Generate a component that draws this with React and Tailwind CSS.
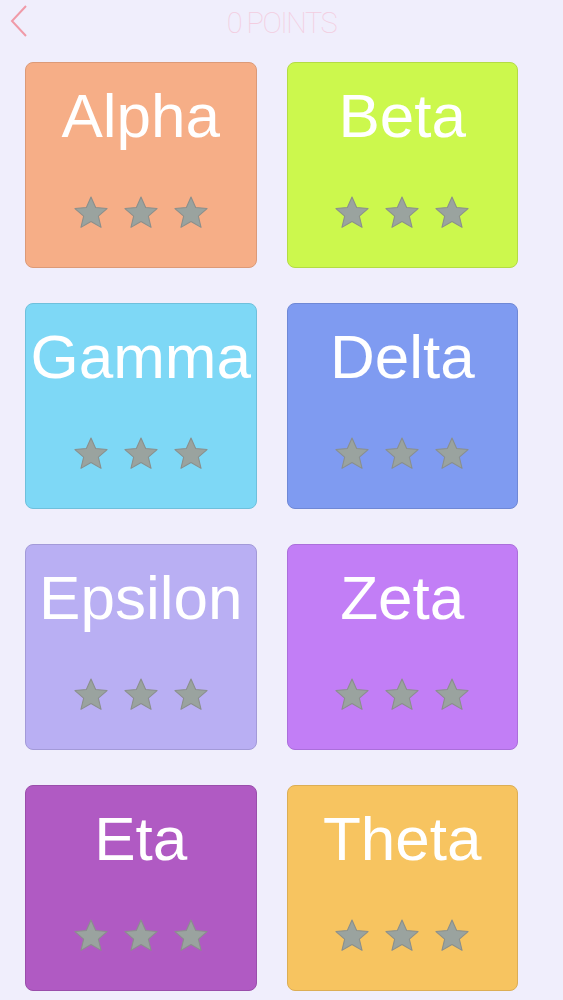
import React from 'react';

const levels = [
  { name: 'Alpha', bg: 'bg-[#f6ae87]', border: 'border-[#dc9a78]' },
  { name: 'Beta', bg: 'bg-[#ccf84d]', border: 'border-[#b4dc44]' },
  { name: 'Gamma', bg: 'bg-[#7ed8f6]', border: 'border-[#6fc0dc]' },
  { name: 'Delta', bg: 'bg-[#7f9bf1]', border: 'border-[#6f88d6]' },
  { name: 'Epsilon', bg: 'bg-[#b9aff3]', border: 'border-[#a39ad8]' },
  { name: 'Zeta', bg: 'bg-[#c27ef6]', border: 'border-[#ab6fdb]' },
  { name: 'Eta', bg: 'bg-[#b05ac3]', border: 'border-[#9a4eab]' },
  { name: 'Theta', bg: 'bg-[#f7c460]', border: 'border-[#dcae55]' },
];

const Star = () => (
  <svg width="36" height="35" viewBox="0 0 24 23">
    <path
      d="M12 1.2l3.1 7 7.6.7-5.8 5 1.8 7.5L12 17.5l-6.7 3.9 1.8-7.5-5.8-5 7.6-.7z"
      fill="#9aa39f"
      stroke="#8a8f8c"
      strokeWidth="0.7"
      strokeLinejoin="round"
    />
  </svg>
);

const LevelCard = ({ name, bg, border }) => (
  <div className={`h-[206px] rounded-lg border ${bg} ${border} flex flex-col items-center`}>
    <div className="pt-[22px] text-[62px] leading-[62px] text-white whitespace-nowrap">{name}</div>
    <div className="mt-[48px] flex gap-[14px]">
      <Star />
      <Star />
      <Star />
    </div>
  </div>
);

export default function App() {
  return (
    <div
      className="min-h-[1000px] bg-[#f0eefc]"
      style={{ fontFamily: '"Liberation Sans", Arial, sans-serif' }}
    >
      {/* header */}
      <div className="relative h-[62px]">
        <svg className="absolute left-[9px] top-[4px]" width="20" height="34" viewBox="0 0 20 34">
          <path d="M17 2L3 17l14 15" fill="none" stroke="#f09aa8" strokeWidth="2" />
        </svg>
        <div
          className="pt-[2px] text-center text-[29px] font-thin tracking-[-1.5px] text-[#f3cde0]"
          style={{ fontFamily: 'Roboto, sans-serif' }}
        >
          0 POINTS
        </div>
      </div>

      <div className="grid grid-cols-2 gap-x-[30px] gap-y-[35px] pl-[25px] pr-[45px]">
        {levels.map((lvl) => (
          <LevelCard key={lvl.name} {...lvl} />
        ))}
      </div>
    </div>
  );
}
